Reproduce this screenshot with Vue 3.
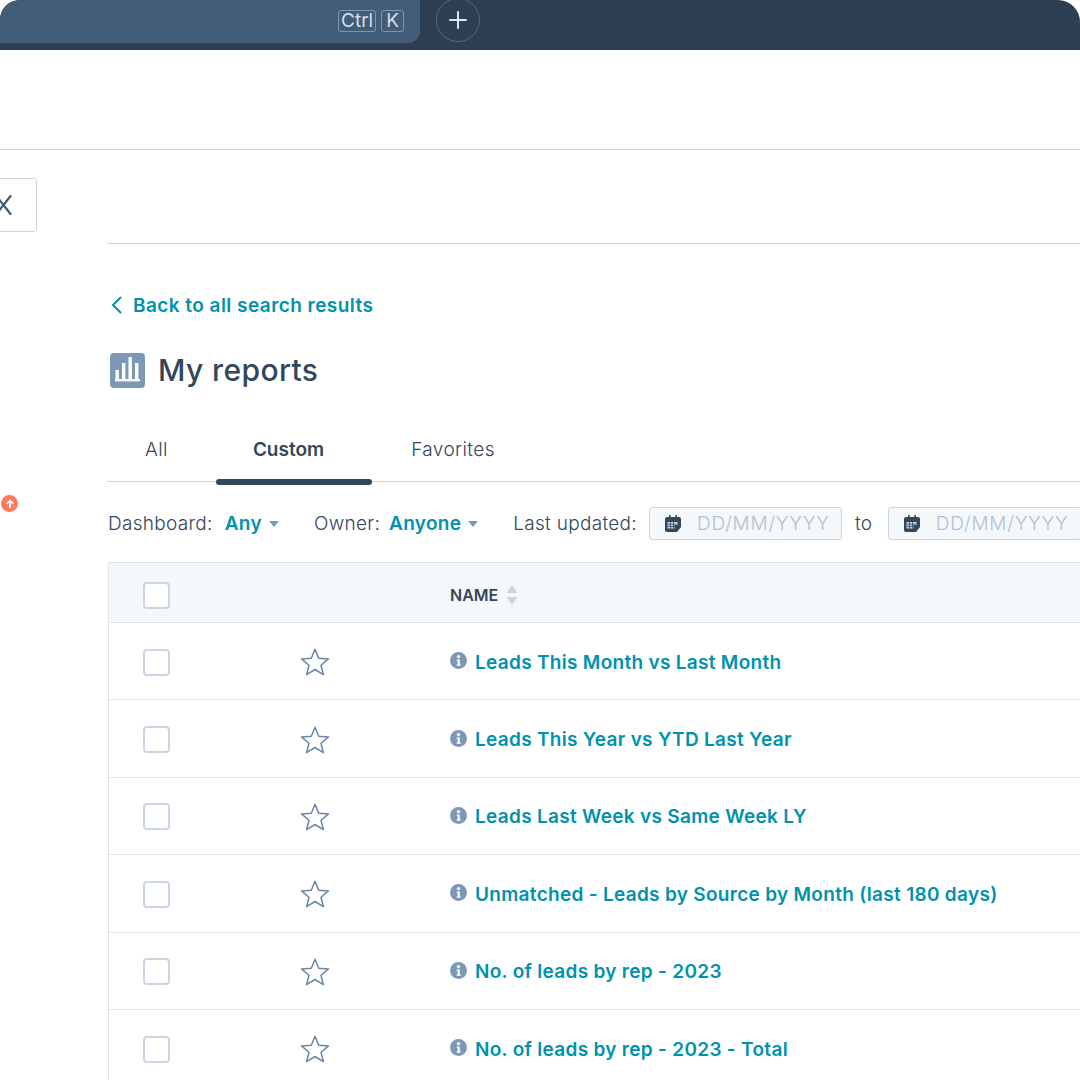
<script setup>
const reports = [
  "Leads This Month vs Last Month",
  "Leads This Year vs YTD Last Year",
  "Leads Last Week vs Same Week LY",
  "Unmatched - Leads by Source by Month (last 180 days)",
  "No. of leads by rep - 2023",
  "No. of leads by rep - 2023 - Total",
];
const tabs = ["All", "Custom", "Favorites"];
</script>

<template>
  <div class="page">
    <header class="topbar">
      <div class="search">
        <kbd class="key">Ctrl</kbd>
        <kbd class="key">K</kbd>
      </div>
      <button class="add">
        <svg width="20" height="20" viewBox="0 0 20 20">
          <path d="M10 2v16M2 10h16" stroke="#dfe6ee" stroke-width="2" stroke-linecap="round" />
        </svg>
      </button>
    </header>
    <div class="nav"></div>
    <div class="body">
      <aside class="rail">
        <button class="close">
          <svg width="20" height="20" viewBox="0 0 20 20">
            <path d="M11.5 1 4.5 10l7 9M-2.5 1l7 9-7 9" fill="none" stroke="#425b76" stroke-width="2.2" stroke-linecap="round" />
          </svg>
        </button>
        <span class="alert">
          <svg width="10" height="10" viewBox="0 0 10 10">
            <path d="M5 9V1.5M1.6 4.8 5 1.4l3.4 3.4" fill="none" stroke="#fff" stroke-width="1.7" />
          </svg>
        </span>
      </aside>
      <main class="main">
        <div class="subhead"></div>
        <a class="back">
          <svg width="12" height="20" viewBox="0 0 12 20">
            <path d="M9.5 2.5 2 10l7.5 7.5" fill="none" stroke="#0091ae" stroke-width="2" stroke-linecap="round" />
          </svg>
          Back to all search results
        </a>
        <div class="title">
          <svg width="35" height="35" viewBox="0 0 35 35">
            <rect width="35" height="35" rx="4" fill="#7c98b6" />
            <rect x="5" y="26" width="25" height="2.4" fill="#fff" />
            <rect x="5.5" y="17" width="3.4" height="9" fill="#fff" />
            <rect x="12" y="10" width="3.4" height="16" fill="#fff" />
            <rect x="18.5" y="4" width="3.4" height="22" fill="#fff" />
            <rect x="25" y="10" width="3.4" height="16" fill="#fff" />
          </svg>
          <h1>My reports</h1>
        </div>
        <nav class="tabs">
          <span v-for="t in tabs" :key="t" class="tab" :class="{ active: t === 'Custom' }">{{ t }}</span>
        </nav>
        <div class="filters">
          <span class="label">Dashboard:</span>
          <span class="value">Any</span>
          <i class="caret"></i>
          <span class="label owner">Owner:</span>
          <span class="value tight">Anyone</span>
          <i class="caret"></i>
          <span class="label updated">Last updated:</span>
          <div class="date">
            <svg class="cal" width="16" height="17" viewBox="0 0 16 17">
              <path d="M4 0h1.6v2.5H4zM10.4 0H12v2.5h-1.6zM2 2h12a2 2 0 0 1 2 2v8l-4 5H2a2 2 0 0 1-2-2V4a2 2 0 0 1 2-2z" fill="#33475b" />
              <path d="M2.5 7h10v3h-3v3.5h-7z" fill="#cbd6e2" />
              <path d="M2.5 9.2h9M2.5 11.5h7M5.5 7v6.5M8.5 7v6.5" stroke="#33475b" stroke-width=".8" />
            </svg>
            DD/MM/YYYY
          </div>
          <span class="label to">to</span>
          <div class="date">
            <svg class="cal" width="16" height="17" viewBox="0 0 16 17">
              <path d="M4 0h1.6v2.5H4zM10.4 0H12v2.5h-1.6zM2 2h12a2 2 0 0 1 2 2v8l-4 5H2a2 2 0 0 1-2-2V4a2 2 0 0 1 2-2z" fill="#33475b" />
              <path d="M2.5 7h10v3h-3v3.5h-7z" fill="#cbd6e2" />
              <path d="M2.5 9.2h9M2.5 11.5h7M5.5 7v6.5M8.5 7v6.5" stroke="#33475b" stroke-width=".8" />
            </svg>
            DD/MM/YYYY
          </div>
        </div>
        <section class="table">
          <div class="row head">
            <span class="check"></span>
            <span></span>
            <span class="name-head">
              NAME
              <svg width="12" height="20" viewBox="0 0 12 20">
                <path d="M6 0l5.5 8H.5zM.5 12h11L6 20z" fill="#cbd6e2" />
              </svg>
            </span>
          </div>
          <div v-for="r in reports" :key="r" class="row">
            <span class="check"></span>
            <span class="star">
              <svg width="30" height="30" viewBox="0 0 30 30">
                <path d="M15 2.2l3.7 9 9.8.7-7.5 6.3 2.4 9.5-8.4-5.2-8.4 5.2 2.4-9.5-7.5-6.3 9.8-.7z" fill="none" stroke="#6a86a6" stroke-width="1.5" stroke-linejoin="round" />
              </svg>
            </span>
            <span class="name">
              <svg class="info" width="17" height="17" viewBox="0 0 17 17">
                <circle cx="8.5" cy="8.5" r="8.5" fill="#7c98b6" />
                <circle cx="8.5" cy="4.6" r="1.7" fill="#fff" />
                <path d="M6.6 7.4h3.2v5h1v1.4H6.6v-1.4h1v-3.6h-1z" fill="#fff" />
              </svg>
              <a>{{ r }}</a>
            </span>
          </div>
        </section>
      </main>
    </div>
  </div>
</template>

<style>
body {
  background: #fff;
}
</style>

<style scoped>
.page {
  width: 1080px;
  height: 1080px;
  overflow: hidden;
  background: #fff;
  color: #33475b;
  font-family: Inter, "Liberation Sans", sans-serif;
}
.topbar {
  height: 50px;
  background: #2e3f53;
  border-radius: 20px 22px 0 0;
  overflow: hidden;
  display: flex;
  align-items: flex-start;
}
.search {
  width: 420px;
  height: 43px;
  background: #435d78;
  border-bottom-right-radius: 12px;
  display: flex;
  justify-content: flex-end;
  align-items: flex-start;
  gap: 5px;
  padding: 10px 16px 0 0;
  box-sizing: border-box;
}
.key {
  font-family: inherit;
  font-size: 19px;
  line-height: 20px;
  height: 22px;
  padding: 0 2px;
  color: #d5dee8;
  border: 1px solid #7d96b0;
  border-radius: 3px;
  box-sizing: border-box;
}
.key:last-child {
  padding: 0 4px;
}
.add {
  width: 44px;
  height: 44px;
  margin: -2px 0 0 16px;
  padding: 0;
  background: none;
  border: 1px solid #4d6b8a;
  border-radius: 50%;
  display: flex;
  align-items: center;
  justify-content: center;
}
.nav {
  height: 99px;
  border-bottom: 1px solid #cbd6e2;
}
.body {
  display: flex;
}
.rail {
  width: 107px;
  flex: none;
  overflow: hidden;
}
.close {
  display: flex;
  align-items: center;
  justify-content: center;
  width: 57px;
  height: 54px;
  margin: 28px 0 0 -20px;
  padding: 0;
  background: #fff;
  border: 1px solid #cbd6e2;
  border-radius: 3px;
}
.alert {
  display: flex;
  align-items: center;
  justify-content: center;
  width: 17px;
  height: 17px;
  margin: 263px 0 0 1px;
  border-radius: 50%;
  background: #ff7a59;
}
.main {
  flex: 1;
  min-width: 0;
}
.subhead {
  height: 93px;
  border-bottom: 1px solid #cbd6e2;
}
.back {
  display: flex;
  align-items: center;
  gap: 10px;
  height: 24px;
  margin: 49px 0 0 4px;
  color: #0091ae;
  font-size: 19px;
  font-weight: 600;
  letter-spacing: 0.45px;
}
.title {
  display: flex;
  align-items: center;
  gap: 13px;
  height: 40px;
  margin: 33px 0 0 3px;
}
.title h1 {
  margin: 0;
  font-size: 30px;
  font-weight: 500;
  letter-spacing: 0.4px;
}
.tabs {
  display: flex;
  height: 64px;
  margin-top: 28px;
  border-bottom: 1px solid #cbd6e2;
  box-sizing: border-box;
}
.tab {
  position: relative;
  padding: 20px 38px 0 39px;
  font-size: 19px;
  font-weight: 300;
  letter-spacing: 0.4px;
}
.tab:first-child {
  padding-left: 38px;
  margin-right: 10px;
}
.tab.active {
  padding: 20px 48px 0 37px;
  font-weight: 600;
  letter-spacing: 0;
}
.tab.active::after {
  content: "";
  position: absolute;
  left: 0;
  right: 0;
  bottom: -4px;
  height: 6px;
  border-radius: 3px;
  background: #33475b;
}
.filters {
  display: flex;
  align-items: center;
  height: 33px;
  margin: 25px 0 22px 1px;
  font-size: 19px;
  letter-spacing: 0.3px;
  white-space: nowrap;
}
.label {
  font-weight: 300;
}
.value {
  margin-left: 12px;
  color: #0091ae;
  font-weight: 600;
}
.value.tight {
  margin-left: 9px;
}
.caret {
  width: 0;
  height: 0;
  margin-left: 7px;
  border: 5.5px solid transparent;
  border-top: 6px solid #7c98b6;
  border-bottom: 0;
}
.owner {
  margin-left: 35px;
}
.updated {
  margin-left: 35px;
}
.date {
  display: flex;
  align-items: center;
  flex: none;
  width: 193px;
  height: 33px;
  margin-left: 12px;
  padding-left: 15px;
  box-sizing: border-box;
  color: #b0c1d4;
  font-size: 19px;
  font-weight: 300;
  letter-spacing: 0.8px;
  background: #f5f8fa;
  border: 1px solid #cbd6e2;
  border-radius: 3px;
}
.cal {
  margin-right: 16px;
}
.to {
  margin: 0 3.5px 0 13px;
}
.table {
  margin-left: 1px;
  border-left: 1px solid #dfe3eb;
}
.row {
  display: grid;
  grid-template-columns: 131px 150px 1fr;
  align-items: center;
  height: 77.4px;
  padding-top: 2px;
  border-bottom: 1px solid #dfe3eb;
  box-sizing: border-box;
}
.row.head {
  height: 61px;
  padding-top: 5px;
  background: #f5f8fa;
  border-top: 1px solid #dfe3eb;
}
.check {
  width: 27px;
  height: 27px;
  margin-left: 34px;
  background: #fff;
  border: 2px solid #cbd6e2;
  border-radius: 4px;
  box-sizing: border-box;
}
.star {
  display: flex;
  justify-content: center;
}
.name-head {
  display: flex;
  align-items: center;
  gap: 8px;
  padding-left: 60px;
  font-size: 16px;
  font-weight: 600;
}
.name {
  display: flex;
  align-items: center;
  gap: 8px;
  padding-left: 60px;
  color: #0091ae;
  font-size: 19px;
  font-weight: 600;
  letter-spacing: 0.3px;
  white-space: nowrap;
}
.info {
  margin-top: -3px;
}
</style>
